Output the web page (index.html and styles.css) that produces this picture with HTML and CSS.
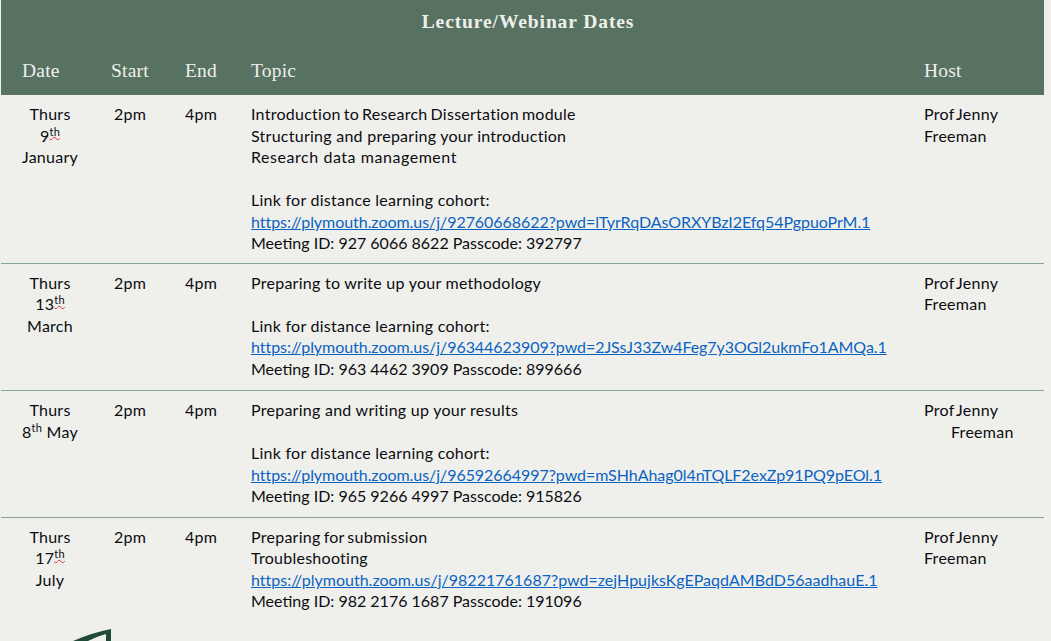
FILE: index.html
```
<!DOCTYPE html>
<html lang="en">
<head>
<meta charset="utf-8">
<title>Lecture/Webinar Dates</title>
<link rel="stylesheet" href="styles.css">
</head>
<body>
<table class="dates">
<colgroup><col class="c-date"><col class="c-start"><col class="c-end"><col class="c-topic"><col class="c-host"></colgroup>
<thead>
<tr class="title-row"><th colspan="5">Lecture/Webinar Dates</th></tr>
<tr class="head-row"><th class="left-date">Date</th><th>Start</th><th>End</th><th class="left">Topic</th><th class="left">Host</th></tr>
</thead>
<tbody>
<tr>
<td class="center">Thurs<br>9<sup class="spell">th</sup><br>January</td><td class="center">2pm</td><td class="center">4pm</td>
<td><span class="tight">Introduction to Research Dissertation module</span><br>Structuring and preparing your introduction<br><span class="wide">Research data management</span><br><br>Link for distance learning cohort:<br><a class="num" href="#">https://plymouth.zoom.us/j/92760668622?pwd=lTyrRqDAsORXYBzI2Efq54PgpuoPrM.1</a><br><span class="num">Meeting ID: 927 6066 8622 Passcode: 392797</span></td>
<td><span class="tighter">Prof Jenny</span><br>Freeman</td>
</tr>
<tr>
<td class="center">Thurs<br>13<sup class="spell">th</sup><br>March</td><td class="center">2pm</td><td class="center">4pm</td>
<td>Preparing to write up your methodology<br><br>Link for distance learning cohort:<br><a class="num" href="#">https://plymouth.zoom.us/j/96344623909?pwd=2JSsJ33Zw4Feg7y3OGl2ukmFo1AMQa.1</a><br><span class="num">Meeting ID: 963 4462 3909 Passcode: 899666</span></td>
<td><span class="tighter">Prof Jenny</span><br>Freeman</td>
</tr>
<tr>
<td class="center">Thurs<br>8<sup>th</sup> May</td><td class="center">2pm</td><td class="center">4pm</td>
<td>Preparing and writing up your results<br><br>Link for distance learning cohort:<br><a class="num" href="#">https://plymouth.zoom.us/j/96592664997?pwd=mSHhAhag0l4nTQLF2exZp91PQ9pEOl.1</a><br><span class="num">Meeting ID: 965 9266 4997 Passcode: 915826</span></td>
<td><span class="tighter">Prof Jenny</span><br><span class="indent">Freeman</span></td>
</tr>
<tr>
<td class="center">Thurs<br>17<sup class="spell">th</sup><br>July</td><td class="center">2pm</td><td class="center">4pm</td>
<td><span class="tight">Preparing for submission</span><br>Troubleshooting<br><a class="num last" href="#">https://plymouth.zoom.us/j/98221761687?pwd=zejHpujksKgEPaqdAMBdD56aadhauE.1</a><br><span class="num">Meeting ID: 982 2176 1687 Passcode: 191096</span></td>
<td><span class="tighter">Prof Jenny</span><br>Freeman</td>
</tr>
</tbody>
</table>
<svg class="logo" width="42" height="12" viewBox="0 0 42 12" aria-hidden="true"><path d="M1 12 Q19 4 39 0 V12 H34 V5 Q26 7 16 12 Z" fill="#1f4a3a"/></svg>
</body>
</html>
```
FILE: styles.css
```
html, body { margin: 0; height: 100%; overflow: hidden; }
body { background: #eff0ec; font-family: Lato, "Liberation Sans", sans-serif; font-size: 16px; line-height: 21.5px; letter-spacing: 0.26px; color: #0c0c10; position: relative; }
.dates { border-collapse: collapse; table-layout: fixed; width: 1043px; margin-left: 1px; }
.c-date { width: 98px; }
.c-start { width: 62px; }
.c-end { width: 80px; }
.c-topic { width: 673px; }
.c-host { width: 130px; }
thead { background: #587261; color: #eff0ec; font-family: "Liberation Serif", "DejaVu Serif", serif; letter-spacing: 0.2px; }
.title-row th { height: 44px; font-size: 19.5px; font-weight: 700; padding: 0 0 0 11px; text-align: center; letter-spacing: 0.9px; }
.head-row th { height: 48px; font-size: 19.5px; font-weight: 400; padding: 3px 0 0; text-align: center; }
.head-row .left { text-align: left; padding-left: 10px; }
.head-row .left-date { text-align: left; padding-left: 21px; }
tbody td { vertical-align: top; padding: 8px 10px 11px; border-bottom: 1px solid #8ba394; }
tbody tr:first-child td { padding: 8px 10px 9px; }
tbody tr:nth-child(3) td { padding-bottom: 10px; }
tbody tr:last-child td { border-bottom: 0; }
tbody td.center { text-align: center; padding-left: 0; padding-right: 0; }
sup { font-size: 11px; line-height: 0; }
.spell { text-decoration: underline wavy #d33; text-decoration-thickness: 1px; }
.num { letter-spacing: 0; }
a.num { letter-spacing: -0.05px; }
a.last { letter-spacing: 0.01px; }
.tight { word-spacing: -1.3px; }
.tighter { word-spacing: -2px; }
.wide { letter-spacing: 0.55px; }
.indent { padding-left: 27px; }
a { color: #0b63c1; }
.logo { position: absolute; left: 72px; top: 629px; }
```
